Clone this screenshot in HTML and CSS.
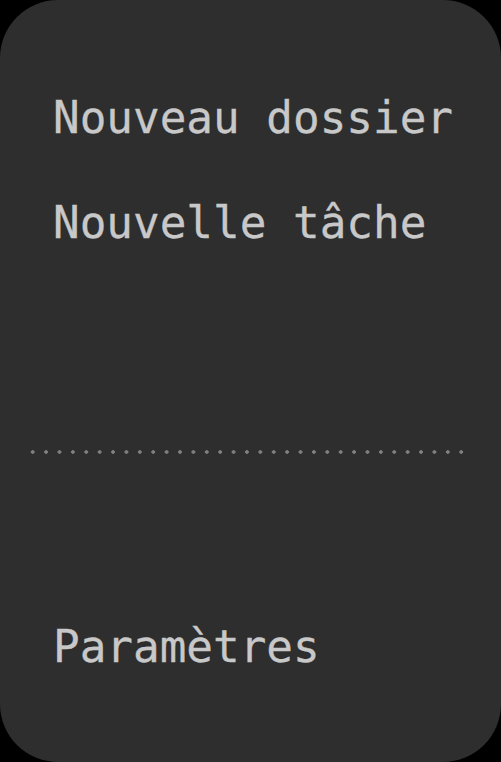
FILE: index.html
```html
<!DOCTYPE html>
<html lang="fr">
<head>
<meta charset="utf-8">
<title>Menu</title>
<link rel="stylesheet" href="styles.css">
</head>
<body>
<nav class="card">
  <ul class="menu-group">
    <li class="menu-item">Nouveau dossier</li>
    <li class="menu-item">Nouvelle tâche</li>
  </ul>
  <div class="separator" role="separator"></div>
  <ul class="menu-group settings">
    <li class="menu-item">Paramètres</li>
  </ul>
</nav>
</body>
</html>
```

FILE: styles.css
```css
html, body {
  margin: 0;
  padding: 0;
  background: #000;
}

body {
  width: 501px;
  height: 762px;
  overflow: hidden;
}

.card {
  box-sizing: border-box;
  width: 501px;
  height: 762px;
  background: #2e2e2e;
  border-radius: 58px;
  padding-top: 96px;
  display: flex;
  flex-direction: column;
  font-family: "DejaVu Sans Mono", monospace;
  color: #c8c8c8;
}

.menu-group {
  list-style: none;
  margin: 0;
  padding: 0 0 0 53px;
  display: flex;
  flex-direction: column;
  gap: 61px;
}

.menu-item {
  font-size: 44.3px;
  line-height: 44px;
  white-space: nowrap;
  -webkit-text-stroke: 0.3px #c8c8c8;
}

.separator {
  margin: 205px 0 0 26px;
  width: 442px;
  height: 4px;
  background-image: radial-gradient(circle, #808080 1.5px, rgba(128,128,128,0) 2.1px);
  background-size: 13.4px 4px;
}

.settings {
  margin-top: 171px;
}
```
